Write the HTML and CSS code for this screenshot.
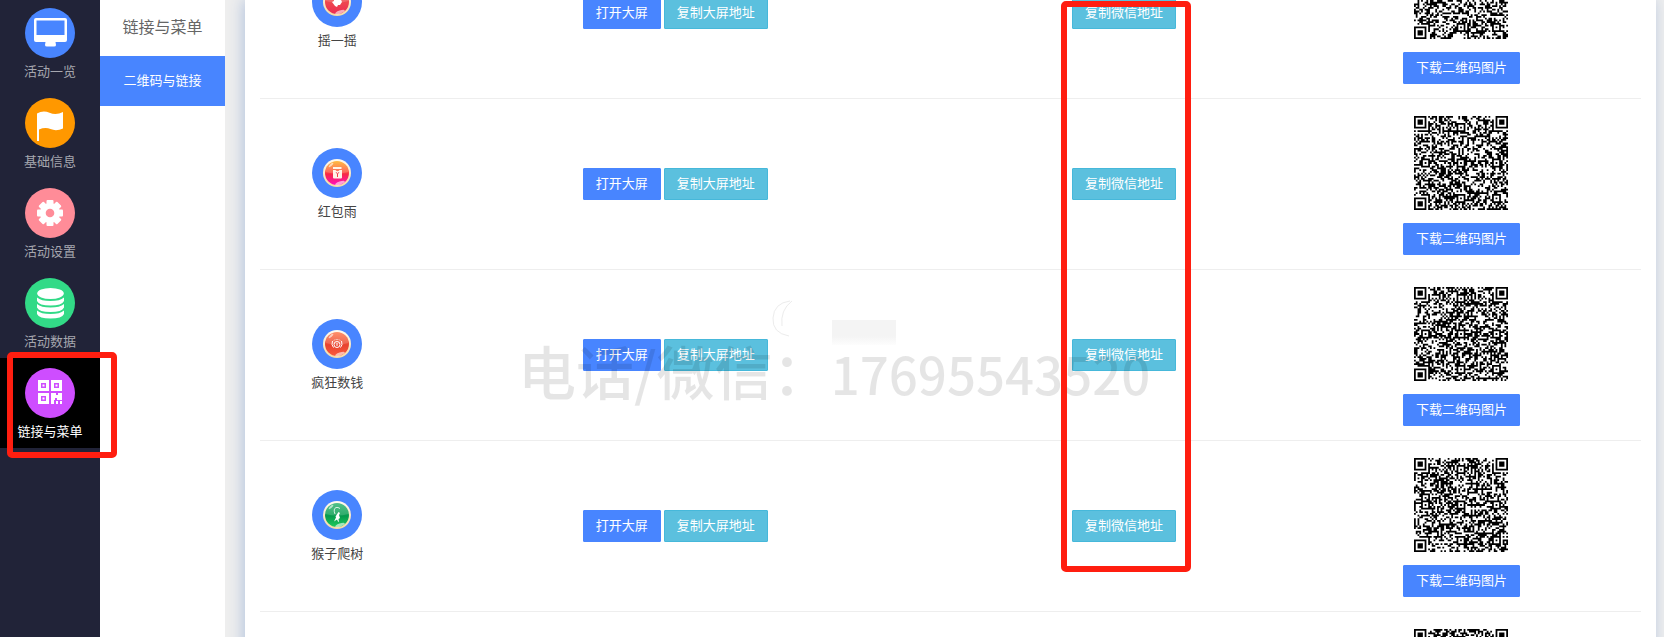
FILE: index.html
```html
<!DOCTYPE html>
<html lang="zh-CN">

<head>
  <meta charset="UTF-8">
  <meta name="viewport" content="width=device-width, initial-scale=1.0">
  <title>二维码与链接</title>
  <link rel="stylesheet" href="styles.css">
</head>

<body>
  <!-- shared gradients and the glossy ring used by the game badges -->
  <svg class="defs" aria-hidden="true">
    <defs>
      <linearGradient id="ring" x1="0" y1="0" x2="0" y2="1">
        <stop offset="0" stop-color="#fffaf0" />
        <stop offset="1" stop-color="#f3d9a4" />
      </linearGradient>
      <linearGradient id="shake" x1="0" y1="0" x2="0" y2="1">
        <stop offset="0" stop-color="#f0644a" />
        <stop offset="1" stop-color="#ec2c53" />
      </linearGradient>
      <linearGradient id="redpack" x1="0" y1="0" x2="0" y2="1">
        <stop offset="0" stop-color="#ffb01c" />
        <stop offset="0.45" stop-color="#fb5040" />
        <stop offset="0.55" stop-color="#f62745" />
        <stop offset="1" stop-color="#ff10c0" />
      </linearGradient>
      <linearGradient id="money" x1="0" y1="0" x2="0" y2="1">
        <stop offset="0" stop-color="#ff7a4c" />
        <stop offset="0.55" stop-color="#e8432f" />
        <stop offset="1" stop-color="#fa5a3c" />
      </linearGradient>
      <linearGradient id="monkey" x1="0" y1="0" x2="0" y2="1">
        <stop offset="0" stop-color="#2fb573" />
        <stop offset="0.55" stop-color="#069a4c" />
        <stop offset="1" stop-color="#1ecb5c" />
      </linearGradient>
      <g id="gloss" fill="#fff">
        <path d="M13.500 24a11.500 11.500 0 0 1 23 0q-11.500 3-23 0z" opacity=".16" />
        <ellipse cx="28" cy="35" rx="5" ry="1.500" transform="rotate(-20 28 35)" opacity=".6" />
        <ellipse cx="19" cy="17" rx="3" ry="1" transform="rotate(-40 19 17)" opacity=".6" />
      </g>
    </defs>
  </svg>

  <div class="layout">
    <nav class="sidebar">
      <a href="#" class="nav-item">
        <span class="nav-icon blue">
          <svg viewBox="0 0 50 50"><path fill="#fff" fill-rule="evenodd" d="M11 10h29q2 0 2 2v20q0 2-2 2h-9.500l.5 3q0 1.500-2 1.500h-7q-2 0-2-1.500l.5-3H11q-2 0-2-2V12q0-2 2-2zM11.500 12.500v14.500h28V12.500z" /></svg>
        </span>
        <span>活动一览</span>
      </a>
      <a href="#" class="nav-item">
        <span class="nav-icon orange">
          <svg viewBox="0 0 50 50"><path fill="#fff" d="M12 15.500q6-3.500 12.500-.8 6.500 3 13.500-.7v16.500q-6.500 3-12.500.6-5-2.200-11.500.4V43h-2z" /></svg>
        </span>
        <span>基础信息</span>
      </a>
      <a href="#" class="nav-item">
        <span class="nav-icon pink">
          <svg viewBox="0 0 50 50">
            <g fill="#fff">
              <rect x="21.500" y="12" width="7" height="26" rx="1" />
              <rect x="21.500" y="12" width="7" height="26" rx="1" transform="rotate(45 25 25)" />
              <rect x="21.500" y="12" width="7" height="26" rx="1" transform="rotate(90 25 25)" />
              <rect x="21.500" y="12" width="7" height="26" rx="1" transform="rotate(135 25 25)" />
              <circle cx="25" cy="25" r="10" />
            </g>
            <circle cx="25" cy="25" r="4.300" fill="#ff8c98" />
          </svg>
        </span>
        <span>活动设置</span>
      </a>
      <a href="#" class="nav-item">
        <span class="nav-icon green">
          <svg viewBox="0 0 50 50">
            <g fill="#fff">
              <ellipse cx="25.500" cy="15.500" rx="13.300" ry="5.500" />
              <path d="M12 19.500q4 3.500 13.500 3.500T39 19.500v3.500q-2 4.500-13.500 4.500T12 23z" />
              <path d="M12 26q4 3.500 13.500 3.500T39 26v3.500q-2 4.500-13.500 4.500T12 29.500z" />
              <path d="M12 32.500q4 3.500 13.500 3.500T39 32.500V36q-2 4.500-13.500 4.500T12 36z" />
            </g>
          </svg>
        </span>
        <span>活动数据</span>
      </a>
      <a href="#" class="nav-item active">
        <span class="nav-icon purple">
          <svg viewBox="0 0 50 50">
            <path fill="#fff" fill-rule="evenodd" d="M13 12h11v11H13zM16 15v5h5v-5zM26 12h11v11H26zM29 15v5h5v-5zM13 25h11v11H13zM16 28v5h5v-5zM26 25h5v2h2v-2h4v7h-5v-2h-2v2h-1v4h-3zM31 33h2v3h-2zM35 33h2v3h-2z" />
            <path fill="#fff" d="M17.500 16.500h2v2h-2zM30.500 16.500h2v2h-2zM17.500 29.500h2v2h-2z" />
          </svg>
        </span>
        <span>链接与菜单</span>
      </a>
    </nav>

    <aside class="submenu">
      <h2>链接与菜单</h2>
      <a href="#" class="active">二维码与链接</a>
    </aside>

    <main class="content">
      <div class="card">
        <table class="link-table">
          <colgroup>
            <col class="col-name">
            <col class="col-screen">
            <col class="col-wechat">
            <col class="col-qr">
          </colgroup>
          <tbody>
            <tr>
              <td>
                <div class="game">
                  <svg class="badge" viewBox="0 0 50 50">
                    <circle cx="25" cy="25" r="14" fill="url(#ring)" />
                    <circle cx="25" cy="25" r="12" fill="url(#shake)" />
                    <path fill="#fff" d="M22 19l5-1 3 7-2 3h-2l-1 2-2-1-3-4 2-1z" />
                    <use href="#gloss" />
                  </svg>
                  <span>摇一摇</span>
                </div>
              </td>
              <td><button class="btn primary">打开大屏</button> <button class="btn info">复制大屏地址</button></td>
              <td><button class="btn info">复制微信地址</button></td>
              <td><svg class="qr" data-seed="11" viewBox="0 0 53 53"></svg><button class="btn primary">下载二维码图片</button></td>
            </tr>
            <tr>
              <td>
                <div class="game">
                  <svg class="badge" viewBox="0 0 50 50">
                    <circle cx="25" cy="25" r="14" fill="url(#ring)" />
                    <circle cx="25" cy="25" r="12" fill="url(#redpack)" />
                    <path fill="#fff3e6" d="M21 19h8.500v2H21zM21 22h2.500q2 2.500 4 0H30v7.500q0 1-1 1h-7q-1 0-1-1z" />
                    <path fill="#f43a48" d="M23.500 24h1l1 1.500 1-1.500h1L26 26v3h-1v-3z" />
                    <use href="#gloss" />
                  </svg>
                  <span>红包雨</span>
                </div>
              </td>
              <td><button class="btn primary">打开大屏</button> <button class="btn info">复制大屏地址</button></td>
              <td><button class="btn info">复制微信地址</button></td>
              <td><svg class="qr" data-seed="23" viewBox="0 0 53 53"></svg><button class="btn primary">下载二维码图片</button></td>
            </tr>
            <tr>
              <td>
                <div class="game">
                  <svg class="badge" viewBox="0 0 50 50">
                    <circle cx="25" cy="25" r="14" fill="url(#ring)" />
                    <circle cx="25" cy="25" r="12" fill="url(#money)" />
                    <g fill="none" stroke="#fff" stroke-width="1">
                      <circle cx="25" cy="25.500" r="3" />
                      <path d="M25 24v3M20.500 22q-1.500 4 1 6.500M29.500 22q1.500 4-1 6.500M22 21.500l1-1M25 21v-1M28 21.500l-1-1" />
                    </g>
                    <use href="#gloss" />
                  </svg>
                  <span>疯狂数钱</span>
                </div>
              </td>
              <td><button class="btn primary">打开大屏</button> <button class="btn info">复制大屏地址</button></td>
              <td><button class="btn info">复制微信地址</button></td>
              <td><svg class="qr" data-seed="37" viewBox="0 0 53 53"></svg><button class="btn primary">下载二维码图片</button></td>
            </tr>
            <tr>
              <td>
                <div class="game">
                  <svg class="badge" viewBox="0 0 50 50">
                    <circle cx="25" cy="25" r="14" fill="url(#ring)" />
                    <circle cx="25" cy="25" r="12" fill="url(#monkey)" />
                    <path fill="none" stroke="#fff" stroke-width=".8" d="M23 24q-2-5 1-6.500 2-.5 4 1" />
                    <path fill="#fff" d="M26.500 22l1.500 1-1 2 1 3-1.500 1 .5 3-1-.5-1-2-3 2 2-4-.5-1z" />
                    <use href="#gloss" />
                  </svg>
                  <span>猴子爬树</span>
                </div>
              </td>
              <td><button class="btn primary">打开大屏</button> <button class="btn info">复制大屏地址</button></td>
              <td><button class="btn info">复制微信地址</button></td>
              <td><svg class="qr" data-seed="41" viewBox="0 0 53 53"></svg><button class="btn primary">下载二维码图片</button></td>
            </tr>
            <tr>
              <td></td>
              <td></td>
              <td></td>
              <td><svg class="qr" data-seed="59" viewBox="0 0 53 53"></svg></td>
            </tr>
          </tbody>
        </table>
      </div>
    </main>
  </div>

  <!-- overlays -->
  <svg class="smudge" viewBox="0 0 130 45" aria-hidden="true">
    <defs>
      <linearGradient id="fade" x1="0" y1="0" x2="0" y2="1">
        <stop offset="0.65" stop-color="#f4f4f4" />
        <stop offset="1" stop-color="#fdfdfd" />
      </linearGradient>
    </defs>
    <path d="M18 1Q2 3 1 18t16 18M20 1Q8 10 10 26" fill="none" stroke="#ececec" />
    <rect x="60" y="20" width="64" height="25" fill="url(#fade)" />
  </svg>
  <div class="watermark">电话/微信：<span class="phone">17695543520</span></div>
  <div class="mark mark-menu"></div>
  <div class="mark mark-wechat"></div>

  <script src="qr.js"></script>
</body>

</html>
```

FILE: styles.css
```css
* {
  box-sizing: border-box;
}

body {
  margin: 0;
  height: 100vh;
  overflow: hidden;
  position: relative;
  font-family: "Noto Sans CJK SC", sans-serif;
  font-size: 13px;
  line-height: 20px;
  color: #444;
  background: #eee;
}

a {
  text-decoration: none;
}

.defs {
  position: absolute;
  width: 0;
  height: 0;
}

.layout {
  display: flex;
  height: 100vh;
}

/* left icon bar */
.sidebar {
  flex: 0 0 100px;
  background: #212338;
}

.nav-item {
  display: flex;
  flex-direction: column;
  align-items: center;
  gap: 3px;
  height: 90px;
  padding-top: 10px;
  color: #a6a7af;
}

.nav-item:first-child {
  margin-top: -2px;
}

.nav-item.active {
  background: #000;
  color: #fff;
}

.nav-icon {
  width: 50px;
  height: 50px;
  border-radius: 50%;
}

.nav-icon svg {
  display: block;
}

.blue {
  background: #4885ff;
}

.orange {
  background: #ff9800;
}

.pink {
  background: #ff8c98;
}

.green {
  background: #32da87;
}

.purple {
  background: #ce4dff;
}

/* second level menu */
.submenu {
  flex: 0 0 125px;
  background: #fff;
  text-align: center;
}

.submenu h2 {
  margin: 0;
  padding-bottom: 4px;
  font-size: 16px;
  font-weight: normal;
  line-height: 52px;
  color: #666;
}

.submenu a {
  display: block;
  padding-bottom: 2px;
  line-height: 48px;
  color: #fff;
}

.submenu a.active {
  background: #4885ff;
}

/* main card */
.content {
  flex: 1;
  min-width: 0;
  padding: 0 8px 0 20px;
  overflow: hidden;
}

.card {
  min-height: 100vh;
  padding: 0 15px;
  overflow: hidden;
  background: #fff;
  box-shadow: -2px 0 14px #b4c4de;
}

.link-table {
  width: 100%;
  /* list is scrolled part way through its first row */
  margin-top: -72px;
  table-layout: fixed;
  border-collapse: separate;
  border-spacing: 0;
}

.col-name {
  width: 9%;
}

.col-screen {
  width: 42%;
}

.col-wechat {
  width: 23%;
}

.col-qr {
  width: 26%;
}

.link-table td {
  height: 171px;
  padding: 0 0 0 2px;
  border-bottom: 1px solid #eee;
  text-align: center;
  vertical-align: middle;
}

.link-table td:first-child {
  padding-left: 30px;
}

.link-table td:last-child {
  padding: 17px 0 14px;
  vertical-align: top;
}

.game {
  display: flex;
  flex-direction: column;
  align-items: center;
  gap: 3px;
}

.badge {
  width: 50px;
  height: 50px;
  border-radius: 50%;
  background: #4885ff;
}

.btn {
  height: 32px;
  padding: 0 12px 2px;
  border: 1px solid #4885ff;
  border-radius: 1px;
  font-family: inherit;
  font-size: 13px;
  line-height: 20px;
  color: #fff;
  cursor: pointer;
}

.btn.primary {
  background: #4885ff;
}

.btn.info {
  background: #5bc0de;
  border-color: #46b8da;
}

.qr {
  display: block;
  width: 94px;
  height: 94px;
  margin: 0 auto 13px;
}

/* things drawn over the page */
.mark {
  position: absolute;
  border: 6px solid #ff1e10;
  border-radius: 5px;
}

.mark-menu {
  left: 7px;
  top: 352px;
  width: 110px;
  height: 106px;
}

.mark-wechat {
  left: 1061px;
  top: 1px;
  width: 130px;
  height: 571px;
}

.watermark {
  position: absolute;
  left: 518px;
  top: 330px;
  font-size: 58px;
  line-height: 80px;
  font-weight: 500;
  white-space: nowrap;
  color: rgba(0, 0, 0, 0.1);
  pointer-events: none;
}

.phone {
  font-size: 51px;
}

.smudge {
  position: absolute;
  left: 772px;
  top: 300px;
  width: 130px;
  height: 45px;
}
```

FILE: qr.js
```js
// Draws a version 9 style code (53 modules) into every .qr element
const SIZE = 53;
const ALIGN = [6, 26, 46];

function makeRandom(seed) {
  return function () {
    seed = (seed * 1664525 + 1013904223) % 4294967296;
    return seed / 4294967296;
  };
}

// square ring pattern around a centre, radius in modules
function stamp(grid, cx, cy, radius, isDark) {
  for (let y = -radius; y <= radius; y++) {
    for (let x = -radius; x <= radius; x++) {
      const row = grid[cy + y];
      if (row && cx + x >= 0 && cx + x < SIZE) {
        row[cx + x] = isDark(Math.max(Math.abs(x), Math.abs(y)));
      }
    }
  }
}

function drawCode(svg) {
  const random = makeRandom(Number(svg.dataset.seed));
  const grid = [];
  for (let y = 0; y < SIZE; y++) {
    grid.push([]);
    for (let x = 0; x < SIZE; x++) grid[y].push(random() < 0.5);
  }

  for (let i = 0; i < SIZE; i++) {
    grid[6][i] = i % 2 === 0;
    grid[i][6] = i % 2 === 0;
  }

  ALIGN.forEach(y => ALIGN.forEach(x => stamp(grid, x, y, 2, d => d !== 1)));
  [[3, 3], [SIZE - 4, 3], [3, SIZE - 4]].forEach(([x, y]) => {
    stamp(grid, x, y, 4, d => d < 2 || d === 3);
  });

  let d = '';
  grid.forEach((row, y) => row.forEach((dark, x) => {
    if (dark) d += `M${x} ${y}h1v1h-1z`;
  }));
  const path = document.createElementNS('http://www.w3.org/2000/svg', 'path');
  path.setAttribute('d', d);
  svg.appendChild(path);
}

document.querySelectorAll('.qr').forEach(drawCode);
```
